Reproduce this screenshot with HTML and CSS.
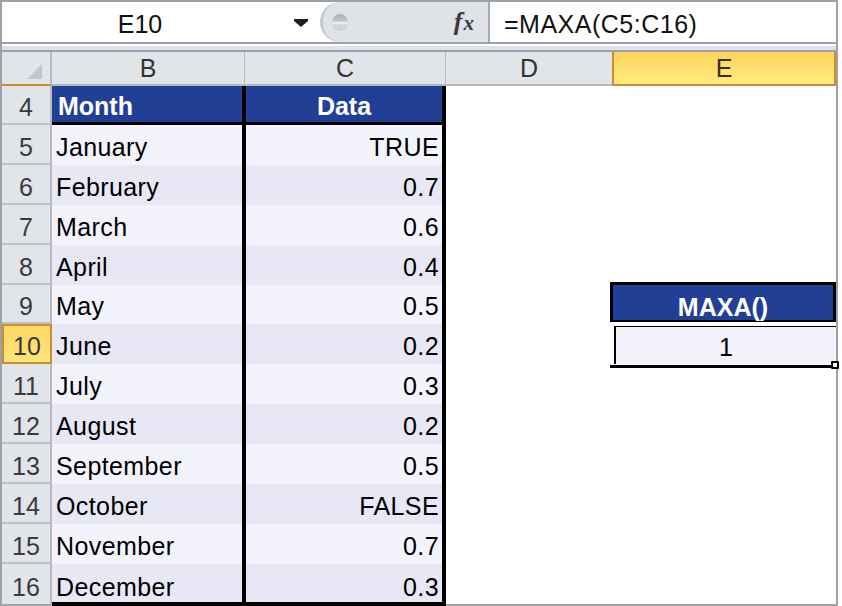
FILE: index.html
```html
<!DOCTYPE html>
<html>
<head>
<meta charset="utf-8">
<link rel="stylesheet" href="styles.css">
</head>
<body>
<div class="frame">
  <div class="fbar">
    <div class="namebox">
      <span class="ref">E10</span>
      <svg class="dd" width="14" height="9" viewBox="0 0 14 9"><polygon points="0,0 14,0 14,2 7,8 0,2" fill="#1e1e1e"/></svg>
    </div>
    <div class="fxzone">
      <span class="knob"></span>
      <span class="fx"><i>f</i><i class="x">x</i></span>
    </div>
    <div class="formula">=MAXA(C5:C16)</div>
  </div>
  <div class="strip"></div>
  <div class="sheet">
    <div class="corner"><span class="tri"></span></div>
    <div class="ch">B</div><div class="ch">C</div><div class="ch nd">D</div><div class="ch sel">E</div>

    <div class="rh">4</div><div class="hd hb">Month</div><div class="hd hc">Data</div><div class="e"></div><div class="e"></div>

    <div class="rh">5</div><div class="cb l">January</div><div class="cc l">TRUE</div><div class="e"></div><div class="e"></div>
    <div class="rh">6</div><div class="cb d">February</div><div class="cc d">0.7</div><div class="e"></div><div class="e"></div>
    <div class="rh">7</div><div class="cb l">March</div><div class="cc l">0.6</div><div class="e"></div><div class="e"></div>
    <div class="rh">8</div><div class="cb d">April</div><div class="cc d">0.4</div><div class="e"></div><div class="e"></div>
    <div class="rh">9</div><div class="cb l">May</div><div class="cc l">0.5</div><div class="e"></div><div class="e9">MAXA()</div>
    <div class="rh sel">10</div><div class="cb d">June</div><div class="cc d">0.2</div><div class="e"></div><div class="e10">1</div>
    <div class="rh">11</div><div class="cb l">July</div><div class="cc l">0.3</div><div class="e"></div><div class="e"></div>
    <div class="rh">12</div><div class="cb d">August</div><div class="cc d">0.2</div><div class="e"></div><div class="e"></div>
    <div class="rh">13</div><div class="cb l">September</div><div class="cc l">0.5</div><div class="e"></div><div class="e"></div>
    <div class="rh">14</div><div class="cb d">October</div><div class="cc d">FALSE</div><div class="e"></div><div class="e"></div>
    <div class="rh">15</div><div class="cb l">November</div><div class="cc l">0.7</div><div class="e"></div><div class="e"></div>
    <div class="rh last">16</div><div class="cb d last">December</div><div class="cc d last">0.3</div><div class="e last"></div><div class="e last"></div>
  </div>
</div>
</body>
</html>
```

FILE: styles.css
```css
html, body {
  margin: 0;
  padding: 0;
  background: #ffffff;
}

body {
  font-family: "Liberation Sans", Arial, sans-serif;
  font-size: 25px;
  color: #000;
}

.frame {
  width: 838px;
  height: 606px;
  box-sizing: border-box;
  border: 2px solid #9ea2a8;
  border-bottom: none;
}

/* formula bar */
.fbar {
  display: flex;
  height: 42px;
  box-sizing: border-box;
  border-bottom: 2px solid #9ea2a8;
  background: #fff;
}

.namebox {
  width: 318px;
  display: flex;
  align-items: center;
}

.ref {
  width: 276px;
  text-align: center;
  box-sizing: border-box;
  height: 40px;
  padding-top: 4px;
  line-height: 36px;
  color: #111;
}

.dd {
  margin-left: 16px;
  margin-top: 3px;
  display: block;
}

.fxzone {
  width: 170px;
  box-sizing: border-box;
  background: #dfe2e7;
  border-radius: 21px 0 0 21px;
  border-left: 3px solid #c6c9ce;
  border-right: 2px solid #a8acb2;
  display: flex;
  align-items: center;
  padding-left: 9px;
}

.knob {
  width: 16px;
  height: 17px;
  border-radius: 50%;
  background: linear-gradient(#aeb2b8 0%, #bfc2c7 42%, #f6f6f6 52%, #d7d9dc 62%, #c9ccd0 100%);
}

.fx {
  margin-left: auto;
  margin-right: 14px;
  font-family: "Liberation Serif", "DejaVu Serif", serif;
  font-size: 26px;
  color: #3a3a3a;
  font-weight: bold;
  line-height: 1;
}

.fx .x {
  font-size: 21px;
  margin-left: 1px;
}

.formula {
  flex: 1;
  box-sizing: border-box;
  height: 40px;
  padding: 4px 0 0 14px;
  line-height: 36px;
  letter-spacing: 0.5px;
  color: #111;
}

.strip {
  height: 8px;
  box-sizing: border-box;
  border-top: 2px solid #fff;
  border-bottom: 2px solid #9ea2a8;
  background: #dde0ee;
}

/* sheet grid */
.sheet {
  display: grid;
  grid-template-columns: 50px 193px 201px 166px 224px;
  grid-template-rows: 34px 39px 40px 40px 40px 40px 39px 40px 40px 40px 40px 40px 40px 42px;
}

.sheet > div {
  box-sizing: border-box;
  min-width: 0;
}

.corner {
  background: #e1e4e9;
  border-right: 2px solid #b5b9bf;
  border-bottom: 2px solid #c8902c;
  display: flex;
  justify-content: flex-end;
  align-items: flex-end;
  padding: 0 8px 5px 0;
}

.tri {
  width: 0;
  height: 0;
  border-left: 15px solid transparent;
  border-bottom: 15px solid #c4c7cc;
}

.ch {
  background: #e1e4e9;
  border-right: 1px solid #b5b9bf;
  border-bottom: 2px solid #b5b9bf;
  display: flex;
  align-items: center;
  justify-content: center;
  color: #333;
  line-height: 28px;
}

.ch.nd {
  border-right: none;
}

.ch.sel {
  background: linear-gradient(#fed25d, #ffec7e);
  border: 2px solid #c8902c;
  border-top: none;
}

.rh {
  background: #e1e4e9;
  border-right: 2px solid #b5b9bf;
  border-bottom: 2px solid #bcc0c5;
  display: flex;
  align-items: flex-end;
  justify-content: center;
  padding-bottom: 2px;
  line-height: 28px;
  color: #3a3a3a;
}

.rh.sel {
  background: linear-gradient(#ffd663, #ffe47a);
  border: 2px solid #c8902c;
}

.rh.last {
  border-bottom: 2px solid #a0a4aa;
  padding-bottom: 3px;
}

.hd {
  background: #213f95;
  color: #fff;
  font-weight: bold;
  border-bottom: 3px solid #000;
  display: flex;
  align-items: flex-end;
  line-height: 28px;
  padding-bottom: 2px;
}

.hb {
  padding-left: 6px;
  border-right: 3px solid #000;
}

.hc {
  justify-content: center;
  border-left: 1px solid #000;
  border-right: 4px solid #000;
}

.cb, .cc {
  display: flex;
  align-items: flex-end;
  line-height: 28px;
  padding-bottom: 4px;
  letter-spacing: 0.4px;
}

.cb {
  padding-left: 4px;
  border-right: 3px solid #000;
}

.cc {
  justify-content: flex-end;
  padding-right: 3px;
  border-left: 1px solid #000;
  border-right: 4px solid #000;
}

.l { background: #f3f3fb; }
.d { background: #e7e7f5; }

.cb.last, .cc.last {
  border-bottom: 4px solid #000;
  padding-bottom: 1px;
}

.e.last {
  border-bottom: 2px solid #a0a4aa;
}

/* result block */
.e9 {
  margin: -3px 0 2px -2px;
  border: 3px solid #000;
  border-bottom-width: 2px;
  background: #213f95;
  color: #fff;
  font-weight: bold;
  display: flex;
  align-items: flex-end;
  justify-content: center;
  line-height: 25px;
}

.e10 {
  margin: 2px 0 0 2px;
  border-top: 1px solid #000;
  border-left: 2px solid #000;
  background: #f3f3fb;
  position: relative;
  display: flex;
  align-items: flex-end;
  justify-content: center;
  line-height: 28px;
  padding-bottom: 3px;
}

.e10::after {
  content: "";
  position: absolute;
  left: -6px;
  right: 3px;
  top: 100%;
  margin-top: 1px;
  height: 3px;
  background: #000;
}

.e10::before {
  content: "";
  position: absolute;
  right: -3px;
  top: 100%;
  margin-top: -3px;
  width: 4px;
  height: 4px;
  border: 2px solid #000;
  background: #fff;
  border-radius: 1px;
  z-index: 1;
}
```
